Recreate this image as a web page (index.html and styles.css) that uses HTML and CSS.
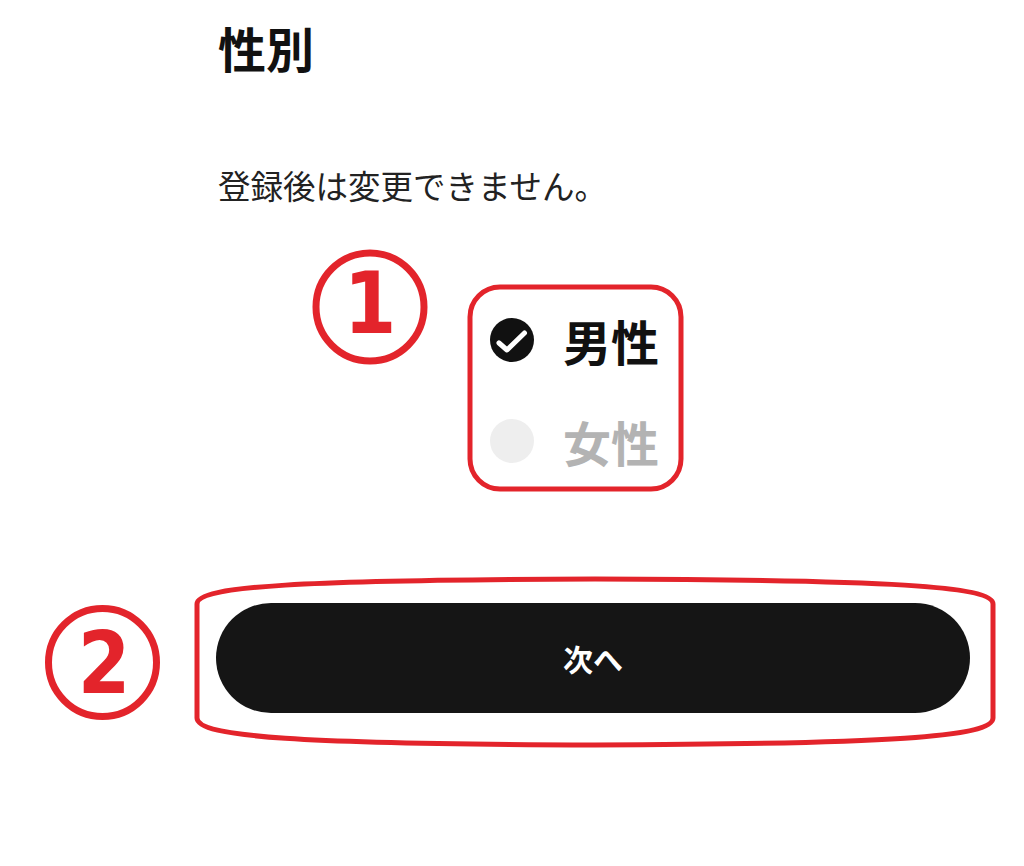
FILE: index.html
```html
<!DOCTYPE html>
<html lang="ja">
<head>
<meta charset="utf-8">
<title>性別</title>
<link rel="stylesheet" href="styles.css">
</head>
<body>
<div class="page">
  <main class="form">
    <h1 class="title">性別</h1>
    <p class="note">登録後は変更できません。</p>
    <div class="options">
      <div class="option selected">
        <span class="radio on">
          <svg width="44" height="44" viewBox="0 0 44 44"><circle cx="22" cy="22" r="22" fill="#111"/><path d="M9 25 L17 32 L34.5 15" fill="none" stroke="#fff" stroke-width="5" stroke-linecap="round" stroke-linejoin="round"/></svg>
        </span>
        <span class="label">男性</span>
      </div>
      <div class="option">
        <span class="radio off"></span>
        <span class="label">女性</span>
      </div>
    </div>
    <button class="next" type="button">次へ</button>
  </main>
  <svg class="marks" width="1024" height="866" viewBox="0 0 1024 866">
    <circle cx="370" cy="307" r="54" fill="none" stroke="#e3242b" stroke-width="7"/>
    <text class="num" text-anchor="middle" transform="translate(370 333) scale(0.88 1)">1</text>
    <rect x="470" y="287" width="211" height="202" rx="30" ry="30" fill="none" stroke="#e3242b" stroke-width="5"/>
    <circle cx="102.5" cy="662.5" r="54" fill="none" stroke="#e3242b" stroke-width="7"/>
    <text class="num" text-anchor="middle" transform="translate(104 693) scale(0.88 1)">2</text>
    <path d="M197 718 L197 604 C197 586 300 580 595 579 C890 580 993 586 993 604 L993 718 C993 737 890 744 595 745 C300 744 197 737 197 718 Z" fill="none" stroke="#e3242b" stroke-width="5"/>
  </svg>
</div>
</body>
</html>
```

FILE: styles.css
```css
* { box-sizing: border-box; }
html, body {
  margin: 0;
  padding: 0;
  background: #fff;
}
body {
  font-family: "Noto Sans CJK JP", "Noto Sans", sans-serif;
  color: #111;
}
.page {
  position: relative;
  width: 1024px;
  height: 866px;
  overflow: hidden;
}
.form {
  display: flex;
  flex-direction: column;
  align-items: flex-start;
  padding: 23px 0 0 216px;
  width: 970px;
}
.title {
  margin: 0;
  font-size: 48px;
  line-height: 48px;
  font-weight: 700;
  color: #111;
  padding-left: 2px;
}
.note {
  margin: 97px 0 0 2px;
  font-size: 32.5px;
  line-height: 33px;
  font-weight: 400;
  color: #222;
}
.options {
  display: flex;
  flex-direction: column;
  gap: 53px;
  margin: 115px 0 0 274px;
}
.option {
  display: flex;
  align-items: center;
  gap: 29px;
  height: 48px;
}
.radio {
  width: 44px;
  height: 44px;
  border-radius: 50%;
  display: block;
  flex: none;
}
.radio svg { display: block; }
.radio.off { background: #eeeeee; }
.label {
  font-size: 48px;
  line-height: 48px;
  font-weight: 700;
  color: #b3b3b3;
}
.option.selected .label { color: #111; }
.next {
  margin-top: 138px;
  width: 754px;
  height: 110px;
  border: none;
  border-radius: 55px;
  background: #151515;
  color: #fff;
  font-family: "Noto Sans CJK JP", sans-serif;
  font-size: 30px;
  font-weight: 700;
  padding: 0;
  cursor: pointer;
}
.marks {
  position: absolute;
  left: 0;
  top: 0;
  pointer-events: none;
}
.num {
  font-family: "DejaVu Sans", sans-serif;
  font-weight: 700;
  font-size: 86px;
  fill: #e3242b;
}
```
